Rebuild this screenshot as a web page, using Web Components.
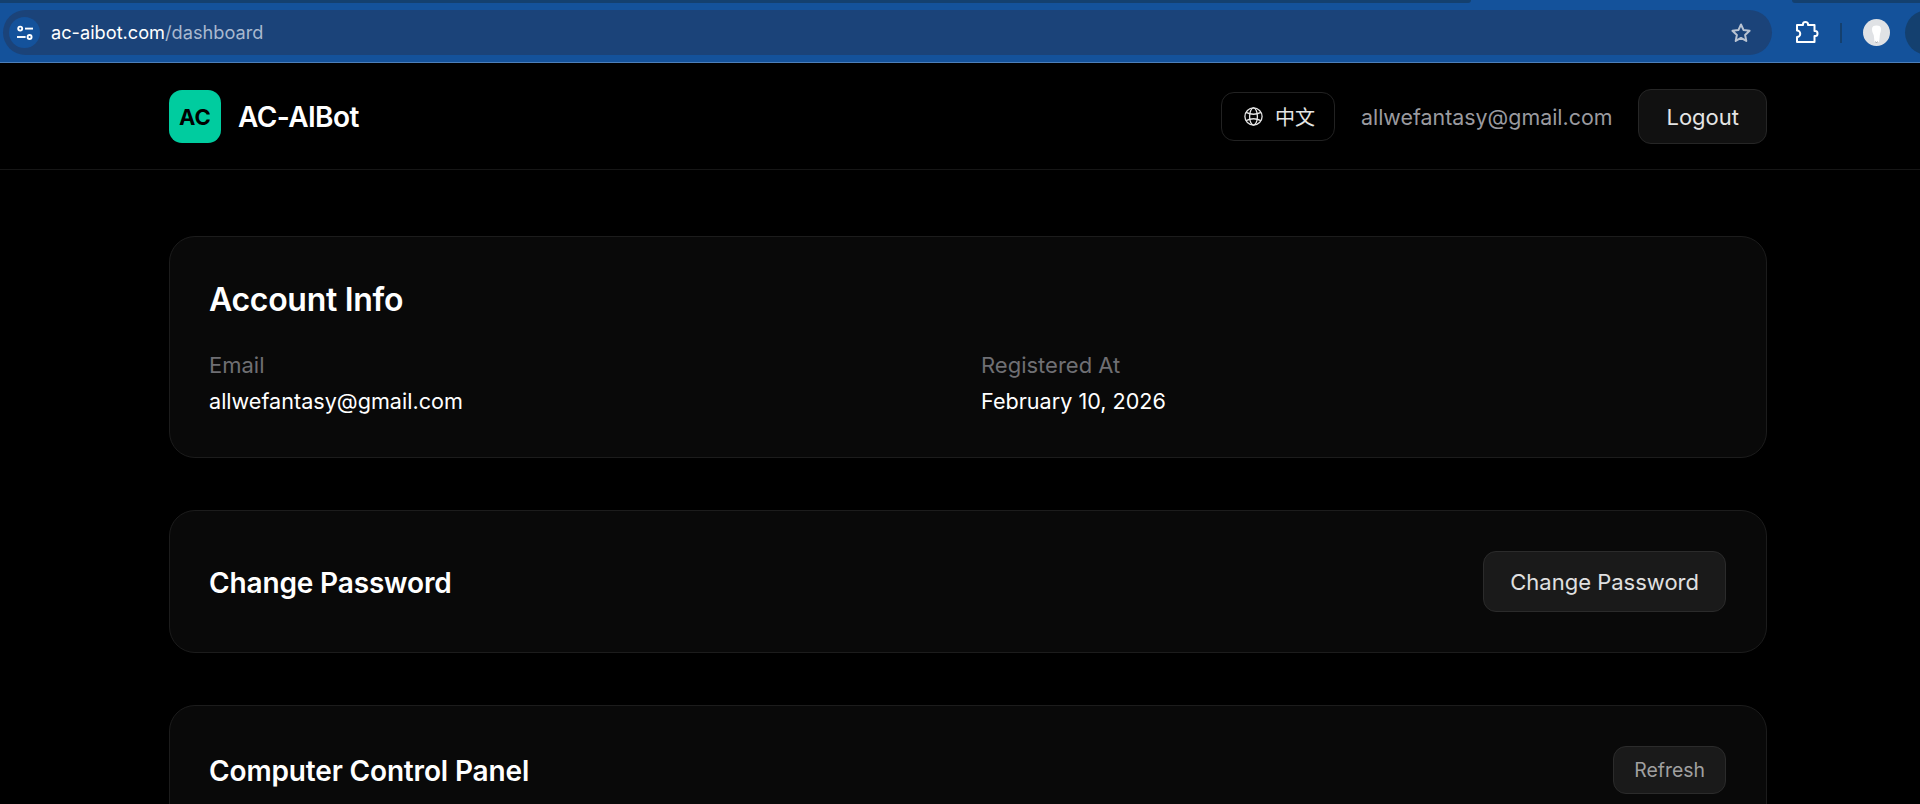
<!DOCTYPE html>
<html>
<head>
<meta charset="utf-8">
<style>
html, body { margin: 0; padding: 0; background: #000; height: 804px; overflow: hidden; }
body { font-family: Inter, "Noto Sans CJK SC", sans-serif; color: #fff; }
</style>
</head>
<body>
<browser-bar url="ac-aibot.com" path="/dashboard"></browser-bar>
<site-header email="allwefantasy@gmail.com"></site-header>
<page-main>
  <info-card>
    <card-title>Account Info</card-title>
    <div slot="body">
      <info-grid>
        <info-field label="Email">allwefantasy@gmail.com</info-field>
        <info-field label="Registered At">February 10, 2026</info-field>
      </info-grid>
    </div>
  </info-card>
  <info-card row>
    <card-title size="md">Change Password</card-title>
    <ui-button slot="action">Change Password</ui-button>
  </info-card>
  <info-card row>
    <card-title size="md">Computer Control Panel</card-title>
    <ui-button slot="action" small>Refresh</ui-button>
  </info-card>
</page-main>

<script>
class browserBar extends HTMLElement {
    connectedCallback() {
        const shadow = this.attachShadow({ mode: 'open' })
        shadow.innerHTML = `
    <style>
    :host{
        display:block;
        height:63px;
        box-sizing:border-box;
        background:#14529b;
        border-bottom:1px solid #4d7fb8;
        position:relative;
        overflow:hidden;
    }
    .tabs{
        height:3px;
        display:flex;
        justify-content:space-between;
    }
    .tabs i{
        display:block;
        height:3px;
        background:#14406f;
    }
    .tabs i:first-child{ width:1471px; border-bottom-right-radius:4px; }
    .tabs i:last-child{ width:128px; border-bottom-left-radius:4px; }
    .row{
        display:flex;
        align-items:center;
        height:45px;
        margin-top:7px;
        padding-left:3px;
    }
    .omni{
        flex:none;
        width:1769px;
        height:45px;
        box-sizing:border-box;
        background:#1b4379;
        border-radius:23px;
        display:flex;
        align-items:center;
        padding:0 20px 0 6px;
    }
    .chip{
        width:31px;
        height:31px;
        border-radius:50%;
        background:#14529b;
        display:flex;
        align-items:center;
        justify-content:center;
        margin-right:11px;
    }
    .url{
        font-size:18.2px;
        color:#fff;
        flex:1;
        padding-bottom:2px;
    }
    .url span{ color:#a9b9cf; }
    .ext{ margin-left:23px; display:block; }
    .sep{ width:2px; height:20px; background:#14406f; margin-left:21px; }
    .avatar{ margin-left:21px; display:block; }
    .more{
        position:absolute;
        right:-31px;
        top:10px;
        width:46px;
        height:45px;
        border-radius:50%;
        background:#14406f;
    }
    </style>
    <div class="tabs"><i></i><i></i></div>
    <div class="row">
      <div class="omni">
        <div class="chip">
          <svg width="18" height="18" viewBox="0 0 18 18" fill="none" stroke="#fff" stroke-width="1.9">
            <circle cx="4.2" cy="4.6" r="2"/><path d="M9 4.6h8"/>
            <circle cx="13.6" cy="13" r="2"/><path d="M1 13h8.6"/>
          </svg>
        </div>
        <div class="url">${this.getAttribute('url')}<span>${this.getAttribute('path')}</span></div>
        <svg width="22" height="22" viewBox="0 0 22 22" fill="none" stroke="#b9c3d2" stroke-width="2" stroke-linejoin="round">
          <path d="M11 2.5l2.6 5.6 6 .7-4.5 4.1 1.2 6-5.3-3-5.3 3 1.2-6L2.4 8.8l6-.7z"/>
        </svg>
      </div>
      <svg class="ext" width="24" height="24" viewBox="0 0 24 24" fill="none" stroke="#fff" stroke-width="2" stroke-linejoin="round">
        <path d="M2 4H8V3a2.5 2 0 0 1 5 0V4H19.5V10H20.5a2 2.5 0 0 1 0 5H19.5V21H2V16a3.2 3.2 0 0 0 0-6.5Z"/>
      </svg>
      <div class="sep"></div>
      <svg class="avatar" width="27" height="27" viewBox="0 0 27 27">
        <circle cx="13.5" cy="13.5" r="13.5" fill="#e0e2e5"/>
        <path d="M9 10c0-2.5 1.5-3.5 4.5-3.5s4.5 1 4.5 3.5c0 3-1 4-1.2 6.5-.2 2-.3 4-.8 6.5h-4.5c-.3-2.5-.4-4.5-.7-6.5C10 14 9 13 9 10z" fill="#fff"/>
        <path d="M12.5 22.5l1 1.5 1-1.5" fill="none" stroke="#a8abb0" stroke-width="1"/>
      </svg>
    </div>
    <div class="more"></div>`
    }
}

class siteHeader extends HTMLElement {
    connectedCallback() {
        const shadow = this.attachShadow({ mode: 'open' })
        shadow.innerHTML = `
    <style>
    :host{
        display:flex;
        align-items:center;
        justify-content:space-between;
        height:107px;
        box-sizing:border-box;
        padding:1px 153px 0 169px;
        border-bottom:1px solid #161616;
        background:#000;
    }
    .brand{ display:flex; align-items:center; gap:17px; }
    .logo{
        width:52px;
        height:53px;
        border-radius:13px;
        background:#00cc9f;
        color:#000;
        font-size:22px;
        font-weight:700;
        display:flex;
        align-items:center;
        justify-content:center;
    }
    .name{ font-size:28px; font-weight:600; color:#fff; letter-spacing:-0.6px; }
    .right{ display:flex; align-items:center; gap:26px; }
    .lang{
        display:flex;
        align-items:center;
        gap:13px;
        height:49px;
        box-sizing:border-box;
        padding:0 19px 0 22px;
        border:1px solid #222;
        border-radius:13px;
        font-size:20px;
        color:#e5e5e5;
    }
    .lang span{ margin-left:-1px; }
    .email{ font-size:21.4px; color:#9a9a9f; }
    .logout{
        height:55px;
        box-sizing:border-box;
        padding:0 27px;
        display:flex;
        align-items:center;
        background:#111;
        border:1px solid #262626;
        border-radius:13px;
        font-size:22px;
        color:#e5e5e5;
    }
    </style>
    <div class="brand">
      <div class="logo">AC</div>
      <div class="name">AC-AIBot</div>
    </div>
    <div class="right">
      <div class="lang">
        <svg width="19" height="19" viewBox="0 0 19 19" fill="none" stroke="#e5e5e5" stroke-width="1.3">
          <circle cx="9.5" cy="9.5" r="8.6"/>
          <ellipse cx="9.5" cy="9.5" rx="3.9" ry="8.6"/>
          <path d="M2 5.4c4.5 2.2 10.5 2.2 15 0M2 13.6c4.5-2.2 10.5-2.2 15 0"/>
        </svg>
        <span>中文</span>
      </div>
      <span class="email">${this.getAttribute('email')}</span>
      <div class="logout">Logout</div>
    </div>`
    }
}

class pageMain extends HTMLElement {
    constructor() {
        super()
        this.attachShadow({ mode: 'open' }).innerHTML = `
    <style>
    :host{
        display:flex;
        flex-direction:column;
        gap:52px;
        padding:66px 153px 0 169px;
    }
    </style>
    <slot></slot>`
    }
}

class infoCard extends HTMLElement {
    constructor() {
        super()
        this.attachShadow({ mode: 'open' }).innerHTML = `
    <style>
    :host{
        display:block;
        box-sizing:border-box;
        padding:40px 40px 40px 39px;
        background:#090909;
        border:1px solid #1c1c1c;
        border-radius:26px;
    }
    :host([row]) .top{
        display:flex;
        align-items:center;
        justify-content:space-between;
    }
    </style>
    <div class="top"><slot></slot><slot name="action"></slot></div>
    <slot name="body"></slot>`
    }
}

class cardTitle extends HTMLElement {
    constructor() {
        super()
        this.attachShadow({ mode: 'open' }).innerHTML = `
    <style>
    :host{
        display:block;
        font-size:32px;
        line-height:46px;
        font-weight:600;
        color:#fff;
        letter-spacing:-0.3px;
    }
    :host([size="md"]){ font-size:28px; line-height:34px; letter-spacing:-0.15px; padding-top:2px; }
    </style>
    <slot></slot>`
    }
}

class infoGrid extends HTMLElement {
    constructor() {
        super()
        this.attachShadow({ mode: 'open' }).innerHTML = `
    <style>
    :host{
        display:grid;
        grid-template-columns:1fr 1fr;
        column-gap:27px;
        margin-top:28px;
    }
    </style>
    <slot></slot>`
    }
}

class infoField extends HTMLElement {
    constructor() {
        super()
        this.attachShadow({ mode: 'open' }).innerHTML = `
    <style>
    :host{ display:block; }
    .label{ font-size:22px; line-height:28px; color:#6f6f73; margin-bottom:7px; }
    .value{ font-size:21.6px; line-height:30px; color:#fff; padding-bottom:1px; }
    </style>
    <div class="label">${this.getAttribute('label')}</div>
    <div class="value"><slot></slot></div>`
    }
}

class uiButton extends HTMLElement {
    constructor() {
        super()
        this.attachShadow({ mode: 'open' }).innerHTML = `
    <style>
    :host{
        display:flex;
        align-items:center;
        box-sizing:border-box;
        height:61px;
        padding:0 26px;
        background:#1a1a1a;
        border:1px solid #2b2b2b;
        border-radius:13px;
        font-size:22px;
        color:#e0e0e0;
    }
    :host([small]){
        height:48px;
        padding:0 20px;
        font-size:19.4px;
        color:#a0a0a0;
    }
    </style>
    <slot></slot>`
    }
}

window.customElements.define('browser-bar', browserBar)
window.customElements.define('site-header', siteHeader)
window.customElements.define('page-main', pageMain)
window.customElements.define('info-card', infoCard)
window.customElements.define('card-title', cardTitle)
window.customElements.define('info-grid', infoGrid)
window.customElements.define('info-field', infoField)
window.customElements.define('ui-button', uiButton)
</script>
</body>
</html>
